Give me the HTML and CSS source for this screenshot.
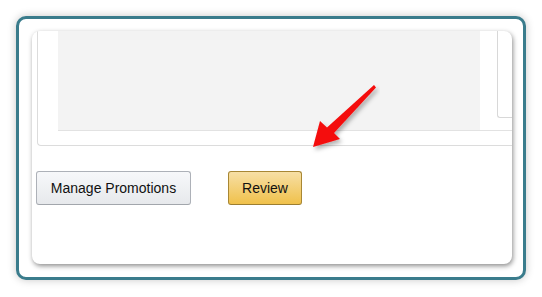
FILE: index.html
```html
<!DOCTYPE html>
<html>
<head>
<meta charset="utf-8">
<link rel="stylesheet" href="styles.css">
</head>
<body>
<div class="frame">
  <div class="card">
    <div class="panel">
      <div class="panel-row">
        <div class="gray-box"></div>
        <div class="side-box"></div>
      </div>
      <div class="divider"></div>
    </div>
    <div class="actions">
      <button class="btn btn-default">Manage Promotions</button>
      <button class="btn btn-primary">Review</button>
    </div>
  </div>
  <svg class="arrow" width="80" height="80" viewBox="300 75 80 80">
    <defs>
      <filter id="sh" x="-30%" y="-30%" width="160%" height="160%">
        <feDropShadow dx="2" dy="3" stdDeviation="2" flood-color="#000" flood-opacity="0.3"/>
      </filter>
    </defs>
    <polygon points="374,85 376,87.5 334,133 340,139 313,147 320,121 327,127.5" fill="#f40c0c" filter="url(#sh)"/>
  </svg>
</div>
</body>
</html>
```
FILE: styles.css
```css
html, body {
  margin: 0;
  padding: 0;
  background: #ffffff;
}
body {
  width: 542px;
  height: 297px;
  overflow: hidden;
  font-family: "Liberation Sans", Arial, sans-serif;
}
.frame {
  position: relative;
  box-sizing: border-box;
  margin: 16px 0 0 16px;
  width: 510px;
  height: 264px;
  border: 3px solid #3a7c8c;
  border-radius: 10px;
  box-shadow: 0 0 8px rgba(0, 0, 0, 0.22);
  padding: 12px 0 0 13px;
  background: #ffffff;
}
.card {
  box-sizing: border-box;
  width: 480px;
  height: 233px;
  background: #ffffff;
  border-radius: 8px;
  box-shadow: 1px 2px 5px rgba(0, 0, 0, 0.45);
  overflow: hidden;
}
.panel {
  box-sizing: border-box;
  margin-left: 5px;
  width: 490px;
  height: 115px;
  border-left: 1px solid #dcdcdc;
  border-bottom: 1px solid #dcdcdc;
  border-bottom-left-radius: 4px;
  padding-left: 20px;
}
.panel-row {
  display: flex;
  gap: 17px;
  height: 99px;
}
.gray-box {
  width: 422px;
  height: 99px;
  background: #f3f3f3;
}
.side-box {
  flex: 1;
  height: 86px;
  border-left: 1px solid #d8d8d8;
  border-bottom: 1px solid #d8d8d8;
  border-bottom-left-radius: 3px;
}
.divider {
  height: 1px;
  background: #e2e2e2;
}
.actions {
  display: flex;
  gap: 37px;
  margin: 25px 0 0 4px;
}
.btn {
  box-sizing: border-box;
  height: 34px;
  border-radius: 3px;
  font-family: "Liberation Sans", Arial, sans-serif;
  font-size: 14px;
  color: #111111;
  padding: 0;
  cursor: pointer;
}
.btn-default {
  width: 155px;
  background: linear-gradient(#f7f8fa, #e7e9ec);
  border: 1px solid #adb1b8;
  border-bottom-color: #a2a6ac;
}
.btn-primary {
  width: 74px;
  background: linear-gradient(#f7dfa5, #f0c14b);
  border: 1px solid #a88734;
  border-bottom-color: #9c7e31;
}
.arrow {
  position: absolute;
  left: 281px;
  top: 56px;
}
```
